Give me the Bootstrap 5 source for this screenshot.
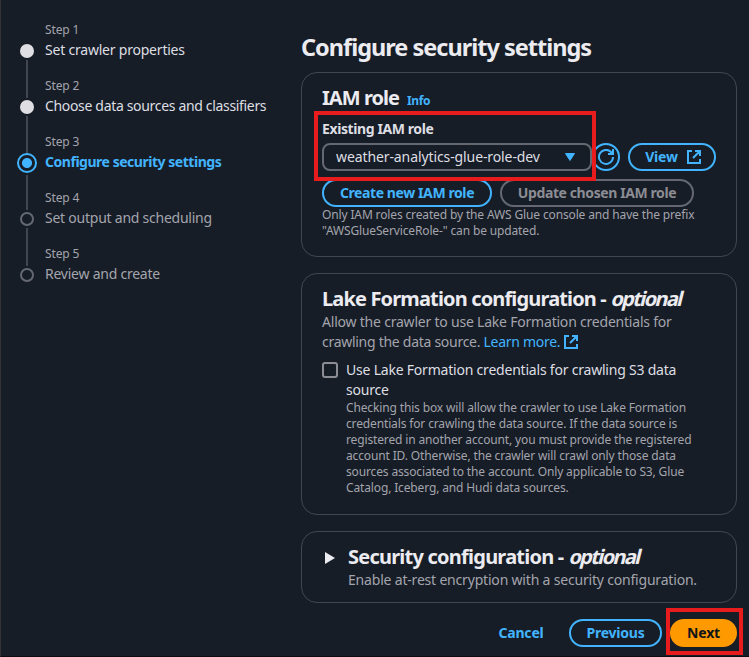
<!DOCTYPE html>
<html lang="en">
<head>
<meta charset="utf-8">
<meta name="viewport" content="width=device-width, initial-scale=1">
<title>Configure security settings</title>
<link href="https://cdn.jsdelivr.net/npm/bootstrap@5.3.0/dist/css/bootstrap.min.css" rel="stylesheet">
<style>
body{background:#161d26;color:#dedee3;font-family:"Noto Sans","Open Sans",sans-serif;font-size:14px;line-height:20px;overflow:hidden;letter-spacing:-.21px}
.page{height:657px;border-left:1px solid #333;border-bottom:1px solid #0a0c10}
.steps{width:300px;padding:20px 0 0 16px}
.step{height:56px;position:relative;padding-left:28px}
.step small,.hint{font-size:12px;line-height:16px;color:#a4a4ad;letter-spacing:-.14px}
.step small{display:block;line-height:20px}
.step .long{letter-spacing:-.33px}
.step .dot{position:absolute;left:3px;top:24px;width:14px;height:14px;border-radius:50%;background:#dedee3}
.step:not(:last-child)::after{content:"";position:absolute;left:9px;top:40px;width:2px;height:38px;background:#424650}
.step.todo{color:#a4a4ad;letter-spacing:-.24px}
.step.todo .dot{background:none;border:2px solid #656871}
.step.now{color:#42b4ff;font-weight:700;letter-spacing:-.47px}
.step.now small{font-weight:400}
.step.now .dot{left:0;top:21px;width:20px;height:20px;border:2px solid #42b4ff;background:radial-gradient(circle,#42b4ff 4.6px,transparent 5.4px)}
.step.now::after{top:43px!important;height:35px!important}
.content-col{width:436px;padding-top:32px}
h1{font-size:23.5px;line-height:30px;font-weight:700;color:#ebebf0;margin:0 0 10px;letter-spacing:-1px}
h2{font-size:20px;line-height:24px;font-weight:700;color:#ebebf0;margin:0;letter-spacing:-.77px}
h2 em{display:inline-block;font-style:normal;transform:skewX(-14deg);letter-spacing:-1.65px;margin-left:2px}
.panel{border:1px solid #424650;border-radius:16px;padding:0 20px;margin-bottom:16px}
.role-panel{height:185px}
.lake-panel{height:242px}
.sec-panel{height:72px}
.blue{color:#42b4ff}
.muted{color:#a4a4ad}
.info{font-size:12px;letter-spacing:-.4px}
.role-head{padding-top:13px}
.role-head h2{letter-spacing:-.95px}
.field-label{margin-top:8px;margin-bottom:4px;letter-spacing:-.4px}
.pill{height:28px;border:2px solid #42b4ff;border-radius:20px;color:#42b4ff;font-weight:700;display:flex;align-items:center;justify-content:center;letter-spacing:-.2px;flex:none}
.pill.off{border-color:#656871;color:#8c8c94}
.pill.primary{background:#ff9900;border-color:#ff9900;color:#0f141a}
.pill.snug{letter-spacing:-.4px}
.w-icon{width:28px}.w-view{width:88px;padding-left:3px}.w-create{width:170px}.w-update{width:194px}
.w-cancel{width:80px}.w-prev{width:93px}.w-next{width:67px}
.picker{width:270px;height:28px;border:2px solid #656871;border-radius:8px;padding:0 14px 0 12px;letter-spacing:-.1px}
.mark-box{position:absolute;border:4px solid #e81c1c;pointer-events:none}
.mark-role{left:12px;top:38px;width:282px;height:70px}
.mark-next{left:-4px;top:-11px;width:77px;height:47px}
.tick{width:16px;height:16px;border:2px solid #8c8c94;border-radius:3px;margin-top:2px;flex:none}
svg{flex:none;fill:none;stroke:currentColor;stroke-width:2}
.learn{letter-spacing:-.28px}
.learn svg{margin-left:-1px;margin-top:-2px}
.lake{padding-top:13px;margin-bottom:1px;letter-spacing:-.85px}
.tri{margin:19px 0 0 2px}
.sec{padding:13px 0 0 12px}
.sec .muted{margin-top:1px;letter-spacing:-.19px}
</style>
</head>
<body>
<div class="page d-flex">
<nav class="steps flex-shrink-0 text-nowrap">
 <div class="step"><span class="dot"></span><small>Step 1</small><span>Set crawler properties</span></div>
 <div class="step"><span class="dot"></span><small>Step 2</small><span class="long">Choose data sources and classifiers</span></div>
 <div class="step now"><span class="dot"></span><small>Step 3</small><span>Configure security settings</span></div>
 <div class="step todo"><span class="dot"></span><small>Step 4</small><span>Set output and scheduling</span></div>
 <div class="step todo"><span class="dot"></span><small>Step 5</small><span>Review and create</span></div>
</nav>
<main class="content-col flex-shrink-0 text-nowrap">
 <h1>Configure security settings</h1>
 <section class="panel role-panel position-relative">
  <div class="role-head d-flex align-items-baseline gap-2"><h2>IAM role</h2><span class="blue fw-bold info">Info</span></div>
  <div class="fw-bold field-label">Existing IAM role</div>
  <div class="d-flex">
   <div class="picker d-flex align-items-center justify-content-between"><span>weather-analytics-glue-role-dev</span><svg width="12" height="10" class="blue"><path d="M1.5 1.5h9L6 8.5z" fill="currentColor" stroke-width="1"/></svg></div>
   <div class="pill w-icon"><svg width="16" height="16" viewBox="0 0 16 16"><path d="M15 8a7 7 0 1 1-2-5l2 2M15 0v5h-5"/></svg></div>
   <div class="pill w-view ms-2 gap-2">View<svg width="16" height="16" viewBox="0 0 16 16"><path d="M6 2H2v12h12v-4M9 2h5v5M14 2 7 9"/></svg></div>
  </div>
  <div class="d-flex gap-2 mt-2"><div class="pill snug w-create">Create new IAM role</div><div class="pill snug off w-update">Update chosen IAM role</div></div>
  <div class="hint">Only IAM roles created by the AWS Glue console and have the prefix<br>"AWSGlueServiceRole-" can be updated.</div>
  <div class="mark-box mark-role"></div>
 </section>
 <section class="panel lake-panel">
  <h2 class="lake">Lake Formation configuration - <em>optional</em></h2>
  <div class="muted">Allow the crawler to use Lake Formation credentials for<br><span class="learn">crawling the data source. <span class="blue">Learn more. <svg width="16" height="16" viewBox="0 0 16 16"><path d="M6 2H2v12h12v-4M9 2h5v5M14 2 7 9"/></svg></span></span></div>
  <div class="d-flex gap-2 mt-2"><span class="tick"></span><div><div>Use Lake Formation credentials for crawling S3 data<br>source</div>
  <div class="hint">Checking this box will allow the crawler to use Lake Formation<br>credentials for crawling the data source. If the data source is<br>registered in another account, you must provide the registered<br>account ID. Otherwise, the crawler will crawl only those data<br>sources associated to the account. Only applicable to S3, Glue<br>Catalog, Iceberg, and Hudi data sources.</div></div></div>
 </section>
 <section class="panel sec-panel d-flex">
  <svg class="tri" width="12" height="14"><path d="M1 1v12l10-6z" fill="#ebebf0" stroke="none"/></svg>
  <div class="sec"><h2>Security configuration - <em>optional</em></h2><div class="muted">Enable at-rest encryption with a security configuration.</div></div>
 </section>
 <div class="d-flex justify-content-end gap-2">
  <div class="pill w-cancel border-0">Cancel</div>
  <div class="pill w-prev">Previous</div>
  <div class="position-relative"><div class="pill primary w-next">Next</div><div class="mark-box mark-next"></div></div>
 </div>
</main>
</div>
<script src="https://cdn.jsdelivr.net/npm/bootstrap@5.3.0/dist/js/bootstrap.bundle.min.js"></script>
</body>
</html>
